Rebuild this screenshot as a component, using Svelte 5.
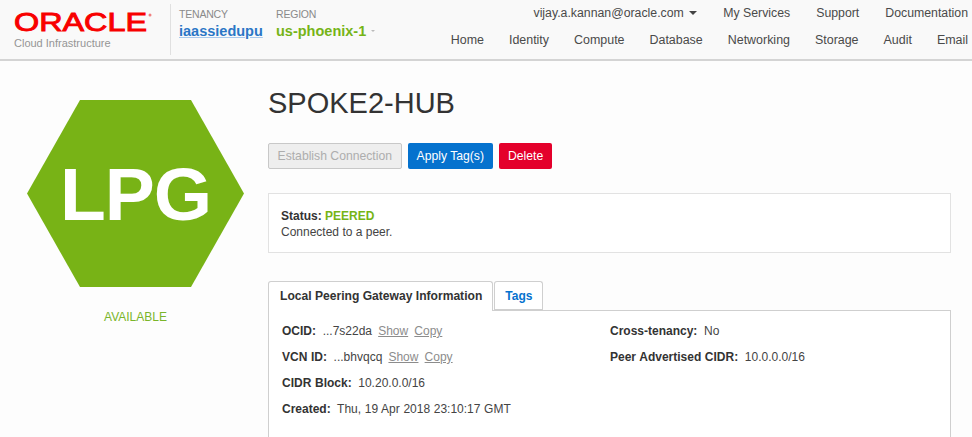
<script>
  const topLinks = ["My Services", "Support", "Documentation"];
  const navLinks = ["Home", "Identity", "Compute", "Database", "Networking", "Storage", "Audit", "Email"];
</script>

<div class="page">
  <header>
    <div class="brand">
      <svg class="logo" width="140" height="28" viewBox="0 0 140 28" aria-label="Oracle">
        <text x="0" y="23" textLength="133" lengthAdjust="spacingAndGlyphs">ORACLE</text>
        <circle cx="136" cy="7" r="1.5" />
      </svg>
      <div class="cloud">Cloud Infrastructure</div>
    </div>
    <div class="context">
      <div class="tenancy">
        <span class="label">TENANCY</span>
        <a class="tenancy-name" href="#tenancy">iaassiedupu</a>
      </div>
      <div class="region">
        <span class="label">REGION</span>
        <span class="region-name">us-phoenix-1 <i class="small-caret"></i></span>
      </div>
    </div>
    <nav>
      <div class="row top">
        <span class="user">vijay.a.kannan@oracle.com <i class="caret"></i></span>
        {#each topLinks as link}
          <span>{link}</span>
        {/each}
      </div>
      <div class="row">
        {#each navLinks as link}
          <span>{link}</span>
        {/each}
      </div>
    </nav>
  </header>

  <main>
    <aside>
      <div class="hex">LPG</div>
      <div class="state">AVAILABLE</div>
    </aside>

    <section>
      <h1>SPOKE2-HUB</h1>
      <div class="actions">
        <button class="disabled" disabled>Establish Connection</button>
        <button class="blue">Apply Tag(s)</button>
        <button class="red">Delete</button>
      </div>

      <div class="status">
        <div><b>Status:</b> <b class="peered">PEERED</b></div>
        <div>Connected to a peer.</div>
      </div>

      <div class="tabs">
        <div class="tab active">Local Peering Gateway Information</div>
        <div class="tab">Tags</div>
      </div>
      <div class="panel">
        <div class="col">
          <div><b>OCID:</b> ...7s22da <u>Show</u> <u>Copy</u></div>
          <div><b>VCN ID:</b> ...bhvqcq <u>Show</u> <u>Copy</u></div>
          <div><b>CIDR Block:</b> 10.20.0.0/16</div>
          <div><b>Created:</b> Thu, 19 Apr 2018 23:10:17 GMT</div>
        </div>
        <div class="col">
          <div><b>Cross-tenancy:</b> No</div>
          <div><b>Peer Advertised CIDR:</b> 10.0.0.0/16</div>
        </div>
      </div>
    </section>
  </main>
</div>

<style>
  :global(body) {
    margin: 0;
    background: #fdfdfd;
  }

  .page {
    width: 972px;
    height: 437px;
    overflow: hidden;
    font-family: "Liberation Sans", Arial, sans-serif;
    font-size: 12px;
    color: #444;
  }

  header {
    height: 61px;
    box-sizing: border-box;
    display: flex;
    background: #f9f9f9;
    border-bottom: 2px solid #d4d4d4;
    padding-top: 4px;
  }

  .brand {
    width: 156px;
    padding: 4px 0 0 14px;
    height: 47px;
    border-right: 1px solid #e0e0e0;
  }

  .logo {
    display: block;
  }

  .logo text {
    font-family: "Liberation Sans", Arial, sans-serif;
    font-size: 25px;
    font-weight: 400;
    fill: #f80000;
    stroke: #f80000;
    stroke-width: 0.9px;
  }

  .logo circle {
    fill: #f08080;
  }

  .cloud {
    font-size: 11px;
    color: #959595;
    line-height: 14px;
  }

  .context {
    display: flex;
    padding: 4px 0 0 8px;
    width: 252px;
    flex: none;
  }

  .tenancy {
    width: 97px;
  }

  .label {
    display: block;
    font-size: 10.5px;
    letter-spacing: -0.2px;
    color: #8a8a8a;
  }

  .tenancy-name {
    display: block;
    margin-top: 3px;
    font-size: 14.5px;
    font-weight: 700;
    color: #2a76c6;
    text-decoration: underline;
    text-decoration-color: #a9c9ec;
  }

  .region-name {
    display: block;
    margin-top: 3px;
    font-size: 14.5px;
    font-weight: 700;
    color: #76b417;
  }

  .small-caret {
    display: inline-block;
    width: 0;
    height: 0;
    margin-left: 1px;
    vertical-align: middle;
    border: 2px solid transparent;
    border-top: 2px solid #bbb;
  }

  nav {
    flex: 1;
    display: flex;
    flex-direction: column;
    gap: 13px;
    padding: 2px 4px 0 0;
  }

  .row {
    display: flex;
    justify-content: flex-end;
    gap: 25px;
    font-size: 12.45px;
    line-height: 14px;
    color: #4a4a4a;
  }

  .row.top {
    gap: 26px;
    font-size: 12.3px;
  }

  .caret {
    display: inline-block;
    width: 0;
    height: 0;
    margin-left: 2px;
    vertical-align: 2px;
    border: 4px solid transparent;
    border-bottom: 0;
    border-top: 4px solid #444;
  }

  main {
    display: flex;
  }

  aside {
    width: 268px;
    flex: none;
    padding: 39px 0 0 27px;
    box-sizing: border-box;
  }

  .hex {
    width: 217px;
    height: 187px;
    display: flex;
    align-items: center;
    justify-content: center;
    clip-path: polygon(0 50%, 53px 0, 164px 0, 100% 50%, 164px 100%, 53px 100%);
    background: #78b316;
    color: #fff;
    font-size: 75px;
    font-weight: 700;
    letter-spacing: -1px;
  }

  .state {
    width: 217px;
    margin-top: 23px;
    text-align: center;
    font-size: 12px;
    color: #7ab52a;
  }

  section {
    width: 683px;
  }

  h1 {
    margin: 25px 0 0;
    font-size: 29px;
    line-height: 34px;
    font-weight: 400;
    color: #333;
  }

  .actions {
    display: flex;
    gap: 6px;
    margin-top: 23px;
  }

  button {
    height: 26px;
    padding: 0 8px;
    border: 1px solid transparent;
    border-radius: 2px;
    font-family: inherit;
    font-size: 12.2px;
    color: #fff;
  }

  .disabled {
    background: #eee;
    border-color: #c8c8c8;
    color: #adadad;
    padding: 0 8.5px;
  }

  .blue {
    background: #0572ce;
  }

  .red {
    background: #e4002b;
  }

  .status {
    margin-top: 24px;
    height: 60px;
    box-sizing: border-box;
    padding: 14px 12px;
    background: #fff;
    border: 1px solid #e2e2e2;
    line-height: 16px;
    color: #444;
  }

  b {
    color: #333;
  }

  .status b.peered {
    color: #76b417;
  }

  .tabs {
    display: flex;
    align-items: flex-end;
    gap: 1px;
    margin-top: 28px;
  }

  .tab {
    height: 29px;
    box-sizing: border-box;
    line-height: 28px;
    padding: 0 10px;
    background: #fff;
    border: 1px solid #cfcfcf;
    border-bottom: 0;
    border-radius: 3px 3px 0 0;
    font-weight: 700;
    font-size: 12px;
    color: #0572ce;
    box-shadow: inset 0 -1px 0 #cfcfcf;
  }

  .tab.active {
    color: #333;
    font-size: 12.1px;
    padding: 0 10px 0 11px;
    box-shadow: none;
    position: relative;
    margin-bottom: -1px;
    height: 30px;
  }

  .panel {
    display: grid;
    grid-template-columns: 328px 1fr;
    padding: 13px 13px;
    height: 160px;
    background: #fff;
    border: 1px solid #cfcfcf;
  }

  .col {
    display: flex;
    flex-direction: column;
    gap: 12px;
    line-height: 14px;
    word-spacing: 0.3px;
  }

  .col b {
    margin-right: 3px;
  }

  u {
    color: #8c8c8c;
    margin-left: 2.5px;
  }
</style>
